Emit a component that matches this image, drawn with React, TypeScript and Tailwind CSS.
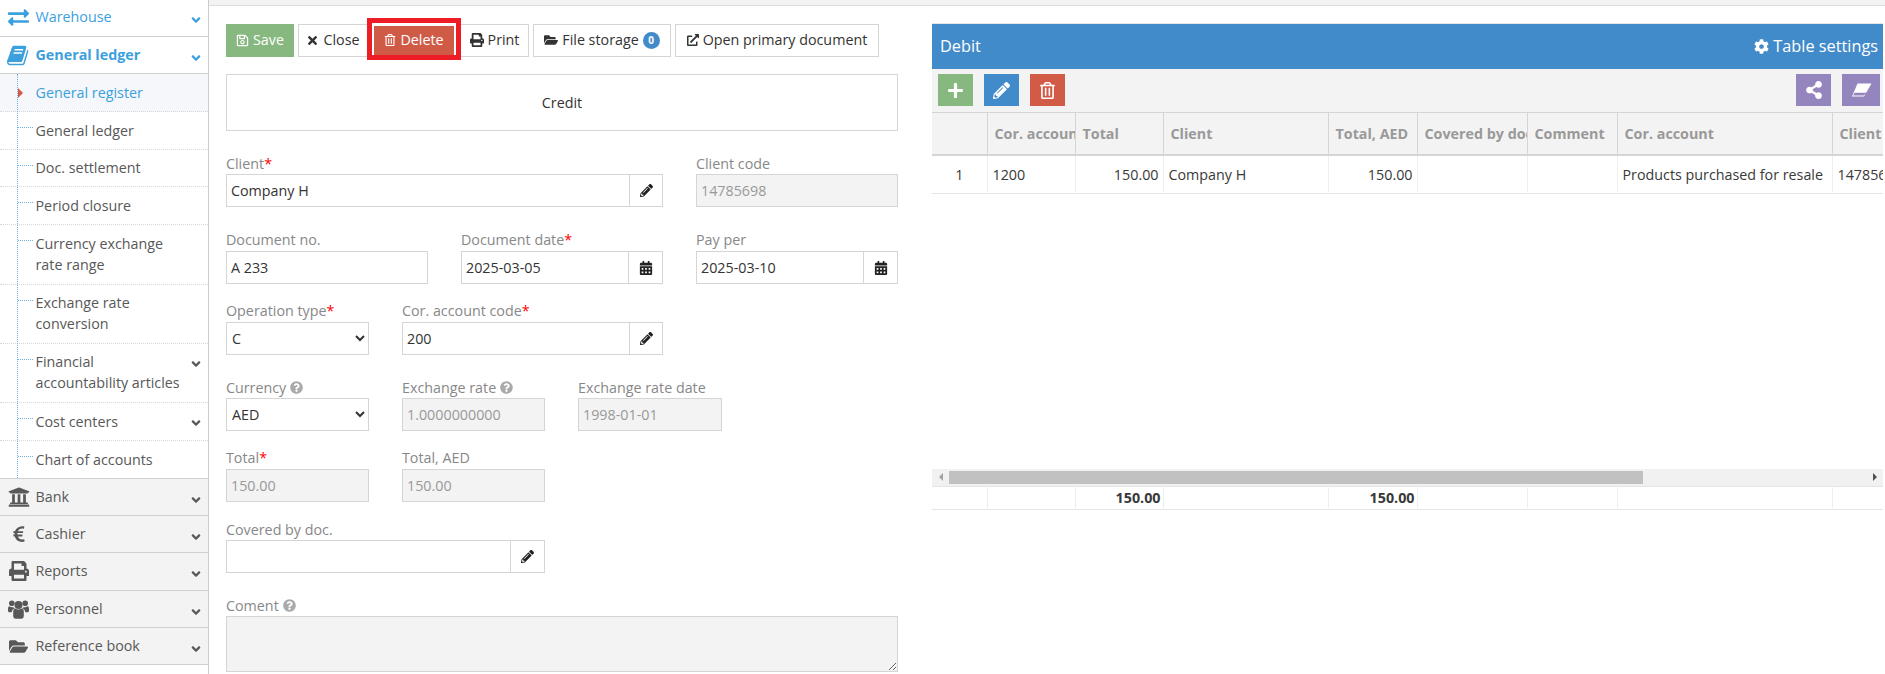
import React from "react";
import {
  FaAngleDown, FaCalendarAlt, FaCog, FaEuroSign, FaExchangeAlt, FaExternalLinkAlt, FaFolderOpen,
  FaPencilAlt, FaPlus, FaPrint, FaQuestionCircle, FaRegSave, FaRegTrashAlt, FaShareAlt, FaTimes, FaUniversity,
} from "react-icons/fa";

function BookIcon() {
  return (
    <svg viewBox="0 0 1792 1792" className="w-[23px] h-[23px]" fill="currentColor">
      <path d="M1639 478q40 57 18 129l-275 906q-19 64-76.5 107.5t-122.5 43.5h-923q-77 0-148.5-53.5t-99.5-131.5q-24-67-2-127 0-4 3-27t4-37q1-8-3-21.5t-3-19.5q2-11 8-21t16.5-23.5 16.5-23.5q23-38 45-91.5t30-91.5q3-10 .5-30t-.5-28q3-11 17-28t17-23q21-36 42-92t25-90q1-9-2.5-32t.5-28q4-13 22-30.5t22-22.5q19-26 42.5-84.5t27.5-96.5q1-8-3-25.5t-2-26.5q2-8 9-18t18-23 17-21q8-12 16.5-30.5t15-35 16-36 19.5-32 26.5-23.5 36-11.5 47.5 5.5l-1 3q38-9 51-9h761q74 0 114 56t18 130l-274 906q-36 119-71.5 153.5t-128.5 34.5h-869q-27 0-38 15-11 16-1 43 24 70 144 70h923q29 0 56-15.5t35-41.5l300-987q7-22 5-57 38 15 59 43zm-1064 2q-4 13 2 22.5t20 9.5h608q13 0 25.5-9.5t16.5-22.5l21-64q4-13-2-22.5t-20-9.5h-608q-13 0-25.5 9.5t-16.5 22.5zm-83 256q-4 13 2 22.5t20 9.5h608q13 0 25.5-9.5t16.5-22.5l21-64q4-13-2-22.5t-20-9.5h-608q-13 0-25.5 9.5t-16.5 22.5z" />
    </svg>
  );
}

function UsersIcon() {
  return (
    <svg viewBox="0 0 21 20" className="w-[21px] h-[20px]" fill="currentColor">
      <circle cx="10.5" cy="6" r="4" />
      <circle cx="3.8" cy="4.2" r="2.8" />
      <circle cx="17.2" cy="4.2" r="2.8" />
      <path d="M5.2 12.8q0-3 2-3.2q3 2 6.6 0q2 .2 2 3.2v4q0 3-2.6 3h-5.400q-2.600 0-2.600-3z" />
      <path d="M0 9.500q0-2.300 1.500-2.300q2 1.400 3.800.700q.6 1.200 1.300 1.500q-2.600 .6-2.800 3.800h-2.300q-1.500 0-1.500-1.500z" />
      <path d="M21 9.500q0-2.300-1.500-2.300q-2 1.400-3.800.700q-.6 1.200-1.300 1.500q2.600 .6 2.800 3.800h2.300q1.500 0 1.500-1.500z" />
    </svg>
  );
}

function Top({ icon, label, active, bold, className = "" }: { icon: React.ReactNode; label: string; active?: boolean; bold?: boolean; className?: string }) {
  return (
    <div className={`flex items-center h-[37px] border-b border-[#d0d0d0] ${active ? "bg-white text-[#3ba0dd]" : "bg-[#f3f3f3] text-[#585858]"} ${bold ? "font-bold" : ""} ${className}`}>
      <span className="w-[35.5px] flex justify-center pl-[2px] shrink-0 text-[20px]">{icon}</span>
      <span className="flex-1">{label}</span>
      <FaAngleDown className="mr-[5px] text-[14px] mt-[6px]" />
    </div>
  );
}

function Sub({ lines, active, arrow, className = "pt-[8px] pb-[8px] border-b" }: { lines: string[]; active?: boolean; arrow?: boolean; className?: string }) {
  return (
    <div className={`relative flex items-start pl-[35.5px] border-dotted border-[#d8d8d8] leading-[21px] ${active ? "bg-[#f5f7fa] text-[#3ba0dd]" : "text-[#585858]"} ${className}`}>
      <div className="flex-1">
        {lines.map((l) => (
          <div key={l}>{l}</div>
        ))}
      </div>
      {arrow && <FaAngleDown className="absolute right-[5px] top-[13px] text-[14px]" />}
      {!active && <span className="absolute left-[18px] top-[15px] w-[15px] border-t border-dotted border-[#6fb0e0]" />}
      {active && <span className="absolute left-[18px] top-[14px] w-0 h-0 border-y-[5px] border-y-transparent border-l-[5px] border-l-[#d15b47]" />}
    </div>
  );
}

function Sidebar() {
  return (
    <aside className="w-[209px] shrink-0 h-[674px] border-r border-[#cccccc] bg-white overflow-hidden">
      <Top icon={<FaExchangeAlt className="text-[21px]" />} label="Warehouse" active className="pb-[2px]" />
      <Top icon={<BookIcon />} label="General ledger" active bold />
      <div className="relative">
        <span className="absolute left-[17px] top-0 bottom-0 border-l border-dotted border-[#6fb0e0] z-10" />
        <Sub lines={["General register"]} active />
        <Sub lines={["General ledger"]} />
        <Sub lines={["Doc. settlement"]} className="pt-[7px] pb-[8px] border-b" />
        <Sub lines={["Period closure"]} />
        <Sub lines={["Currency exchange", "rate range"]} className="pt-[8px] pb-[9px] border-b" />
        <Sub lines={["Exchange rate", "conversion"]} className="pt-[7px] pb-[9px] border-b" />
        <Sub lines={["Financial", "accountability articles"]} arrow className="pt-[7px] pb-[9px] border-b" />
        <Sub lines={["Cost centers"]} arrow />
        <Sub lines={["Chart of accounts"]} className="pt-[8px] pb-[8px]" />
      </div>
      <div className="border-t border-[#d0d0d0]">
        <Top icon={<FaUniversity className="text-[22px]" />} label="Bank" />
        <Top icon={<FaEuroSign className="text-[18px]" />} label="Cashier" />
        <Top icon={<FaPrint />} label="Reports" className="!h-[38px] pb-[1px]" />
        <Top icon={<UsersIcon />} label="Personnel" className="pb-[1px]" />
        <Top icon={<FaFolderOpen className="text-[19px]" />} label="Reference book" />
      </div>
    </aside>
  );
}

function Btn({ children, className = "" }: { children: React.ReactNode; className?: string }) {
  return (
    <button className={`h-[33px] pb-[1px] border border-[#d5d5d5] bg-white text-[#333] flex items-center justify-center gap-[4px] ${className}`}>
      {children}
    </button>
  );
}

function Toolbar() {
  return (
    <div className="flex gap-[4px]">
      <Btn className="w-[68px] !bg-[#87b87f] !border-[#87b87f] !text-white"><FaRegSave className="text-[13px]" />Save</Btn>
      <Btn className="w-[70px]"><FaTimes className="text-[13px]" />Close</Btn>
      <div className="relative w-[84px]">
        <Btn className="w-full !bg-[#cf5b47] !border-2 !border-white !text-white"><FaRegTrashAlt className="text-[12px]" />Delete</Btn>
        <span className="absolute -left-[5px] -right-[5px] -top-[6px] -bottom-[3px] border-[5px] border-[#ee1c25]" />
      </div>
      <Btn className="w-[69px] gap-[3px]"><FaPrint className="text-[14px]" />Print</Btn>
      <Btn className="w-[138px]">
        <FaFolderOpen className="text-[14px]" />File storage
        <span className="w-[17px] h-[17px] rounded-full bg-[#428bca] text-white text-[10px] font-bold flex items-center justify-center">0</span>
      </Btn>
      <Btn className="w-[204px]"><FaExternalLinkAlt className="text-[12px]" />Open primary document</Btn>
    </div>
  );
}

function Label({ text, req, help }: { text: string; req?: boolean; help?: boolean }) {
  return (
    <div className="h-[21px] leading-[21px] text-[#888888] flex items-center whitespace-nowrap">
      {text}
      {req && <span className="text-[#ff0000]">*</span>}
      {help && <FaQuestionCircle className="ml-[4px] text-[13px] text-[#aaaaaa]" />}
    </div>
  );
}

function Field({ w, label, req, help, value = "", ro, addon, addonW = "w-[33px]" }: {
  w: string; label: string; req?: boolean; help?: boolean; value?: string; ro?: boolean; addon?: "pen" | "cal"; addonW?: string;
}) {
  return (
    <div className={w}>
      <Label text={label} req={req} help={help} />
      <div className="flex h-[33px] border border-[#d5d5d5]">
        <input
          readOnly
          value={value}
          className={`flex-1 min-w-0 pl-[4px] outline-none ${ro ? "bg-[#f3f3f3] text-[#999999]" : "bg-white text-[#333]"}`}
        />
        {addon && (
          <span className={`flex items-center justify-center border-l border-[#d5d5d5] text-[#222] text-[13px] ${addonW}`}>
            {addon === "pen" ? <FaPencilAlt /> : <FaCalendarAlt className="text-[14px]" />}
          </span>
        )}
      </div>
    </div>
  );
}

function SelectField({ label, req, help, value }: { label: string; req?: boolean; help?: boolean; value: string }) {
  return (
    <div className="w-[143px]">
      <Label text={label} req={req} help={help} />
      <select className="w-full h-[33px] border border-[#d5d5d5] bg-white text-[#333] pl-[1px] outline-none" defaultValue={value}>
        <option>{value}</option>
      </select>
    </div>
  );
}

function Form() {
  return (
    <section className="w-[672px] shrink-0">
      <Toolbar />
      <div className="mt-[17px] h-[57px] border border-[#d5d5d5] flex items-center justify-center text-[#333]">Credit</div>
      <div className="mt-[22px] flex gap-[33px]">
        <Field w="w-[437px]" label="Client" req value="Company H" addon="pen" />
        <Field w="w-[202px]" label="Client code" value="14785698" ro />
      </div>
      <div className="mt-[22px] flex gap-[33px] [&>div>div:first-child]:mb-[1px]">
        <Field w="w-[202px]" label="Document no." value="A 233" />
        <Field w="w-[202px]" label="Document date" req value="2025-03-05" addon="cal" addonW="w-[34px]" />
        <Field w="w-[202px]" label="Pay per" value="2025-03-10" addon="cal" addonW="w-[34px]" />
      </div>
      <div className="mt-[16px] flex gap-[33px] [&>div>div:first-child]:mb-[1px]">
        <SelectField label="Operation type" req value="C" />
        <Field w="w-[261px]" label="Cor. account code" req value="200" addon="pen" />
      </div>
      <div className="mt-[22px] flex gap-[33px]">
        <SelectField label="Currency" help value="AED" />
        <Field w="w-[143px]" label="Exchange rate" help value="1.0000000000" ro />
        <Field w="w-[144px]" label="Exchange rate date" value="1998-01-01" ro />
      </div>
      <div className="mt-[16px] flex gap-[33px] [&>div>div:first-child]:mb-[1px]">
        <Field w="w-[143px]" label="Total" req value="150.00" ro />
        <Field w="w-[143px]" label="Total, AED" value="150.00" ro />
      </div>
      <div className="mt-[17px] flex">
        <Field w="w-[319px]" label="Covered by doc." addon="pen" addonW="w-[34px]" />
      </div>
      <div className="mt-[22px]">
        <Label text="Coment" help />
        <textarea readOnly className="block w-full h-[56px] border border-[#d5d5d5] bg-[#f3f3f3] outline-none" />
      </div>
    </section>
  );
}

const cols = [55, 88, 88, 165, 89, 110, 90, 215, 60];
const heads = ["", "Cor. account code", "Total", "Client", "Total, AED", "Covered by doc.", "Comment", "Cor. account", "Client code"];
const rightAligned = [false, false, true, false, true, false, false, false, false];
const row = ["1", "1200", "150.00", "Company H", "150.00", "", "", "Products purchased for resale", "14785698"];
const foot = ["", "", "150.00", "", "150.00", "", "", "", ""];

function ToolBtn({ bg, children, w = "w-[35px]" }: { bg: string; children: React.ReactNode; w?: string }) {
  return <button className={`${w} h-[32px] ${bg} text-white flex items-center justify-center`}>{children}</button>;
}

function Colgroup() {
  return (
    <colgroup>
      {cols.map((c, i) => (
        <col key={i} style={{ width: c }} />
      ))}
    </colgroup>
  );
}

function Grid() {
  return (
    <section className="w-[951px] shrink-0 -mt-[1px] border-t border-[#e5e5e5]">
      <div className="h-[45px] bg-[#428bca] text-white flex items-center justify-between pl-[8px] pr-[5px] text-[16.3px]">
        <span>Debit</span>
        <span className="flex items-center gap-[4px]"><FaCog className="text-[15px]" />Table settings</span>
      </div>
      <div className="h-[44px] bg-[#f3f3f3] border-b border-[#d5d5d5] flex items-start pt-[5px] pl-[6px] pr-[3px] gap-[11px]">
        <ToolBtn bg="bg-[#87b87f]"><FaPlus className="text-[17px]" /></ToolBtn>
        <ToolBtn bg="bg-[#428bca]"><FaPencilAlt className="text-[17px]" /></ToolBtn>
        <ToolBtn bg="bg-[#d15b47]"><FaRegTrashAlt className="text-[17px]" /></ToolBtn>
        <div className="flex-1" />
        <ToolBtn bg="bg-[#9585bf]"><FaShareAlt className="text-[18px]" /></ToolBtn>
        <ToolBtn bg="bg-[#9585bf]" w="w-[38px]">
          <svg viewBox="0 0 21 14" className="w-[21px] h-[14px]">
            <path d="M6.500 .5H20.500L13 13.500H1z" fill="white" />
            <path d="M3.500 9.700H16.300L12.400 12.400H2.200z" fill="#9585bf" />
          </svg>
        </ToolBtn>
      </div>
      <div className="overflow-hidden">
        <table className="table-fixed border-collapse w-[960px]">
          <Colgroup />
          <thead>
            <tr className="h-[42px] bg-[#f3f3f3] border-b-2 border-[#d5d5d5]">
              {heads.map((h, i) => (
                <th key={i} className="border-r border-[#d5d5d5] p-0 text-left font-bold text-[#999999]">
                  <div className="overflow-hidden whitespace-nowrap pl-[7px]">{h}</div>
                </th>
              ))}
            </tr>
          </thead>
          <tbody>
            <tr className="h-[38px] border-b border-[#e5e5e5] text-[#393939]">
              {row.map((c, i) => (
                <td key={i} className={`border-r border-[#eeeeee] p-0 ${i === 0 ? "text-center" : rightAligned[i] ? "text-right pr-[4px]" : "pl-[5px]"}`}>
                  <div className="overflow-hidden whitespace-nowrap">{c}</div>
                </td>
              ))}
            </tr>
          </tbody>
        </table>
      </div>
      <div className="h-[275px]" />
      <div className="h-[17px] bg-[#f1f1f1] flex items-center">
        <span className="w-[17px] flex justify-center"><span className="w-0 h-0 border-y-[4px] border-y-transparent border-r-[4px] border-r-[#a3a3a3]" /></span>
        <span className="w-[694px] h-[13px] bg-[#c1c1c1]" />
        <span className="flex-1" />
        <span className="w-[17px] flex justify-center"><span className="w-0 h-0 border-y-[4px] border-y-transparent border-l-[4px] border-l-[#505050]" /></span>
      </div>
      <div className="overflow-hidden">
        <table className="table-fixed border-collapse w-[960px]">
          <Colgroup />
          <tbody>
            <tr className="h-[23px] border-y border-[#e5e5e5] font-bold text-[#393939]">
              {foot.map((c, i) => (
                <td key={i} className="border-r border-[#eeeeee] p-0 text-right pr-[2px]">{c}</td>
              ))}
            </tr>
          </tbody>
        </table>
      </div>
    </section>
  );
}

export default function App() {
  return (
    <div className="flex h-[674px] w-[1885px] overflow-hidden bg-white font-['Open_Sans',sans-serif] text-[14.3px]">
      <Sidebar />
      <main className="flex-1 min-w-0">
        <div className="h-[6px] bg-[#f3f3f3] border-b border-[#dddddd]" />
        <div className="flex pl-[17px] pt-[18px] gap-[34px]">
          <Form />
          <Grid />
        </div>
      </main>
    </div>
  );
}
